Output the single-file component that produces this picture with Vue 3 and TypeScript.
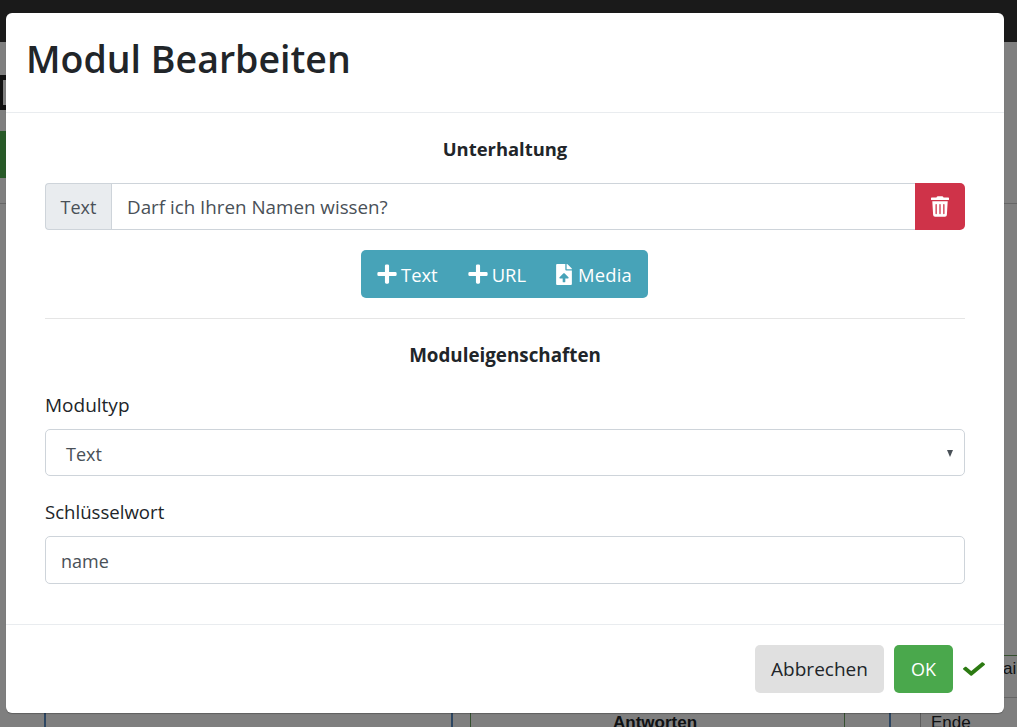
<script setup lang="ts">
const actions: { label: string; icon: 'plus' | 'file' }[] = [
  { label: 'Text', icon: 'plus' },
  { label: 'URL', icon: 'plus' },
  { label: 'Media', icon: 'file' },
]
</script>

<template>
  <div class="page">
    <div class="topbar"></div>
    <div class="brand"><i></i></div>
    <div class="greenbtn"></div>
    <div class="rule"></div>
    <div class="under col-a"></div>
    <div class="under col-b"></div>
    <div class="under col-c"></div>
    <div class="under col-d"></div>
    <div class="under col-e"></div>
    <div class="under col-f"></div>
    <div class="under-text antworten">Antworten</div>
    <div class="under-text ende">Ende</div>
    <div class="under-text ail">ail</div>
    <div class="under-line l1"></div>
    <div class="under-line l2"></div>

    <div class="backdrop"></div>
    <section class="modal">
      <header class="modal-header"><h1>Modul Bearbeiten</h1></header>
      <div class="modal-body">
        <h2 class="section first">Unterhaltung</h2>
        <div class="input-group">
          <span class="addon">Text</span>
          <span class="field">Darf ich Ihren Namen wissen?</span>
          <button class="trash" type="button" aria-label="Löschen">
            <svg width="18" height="21" viewBox="0 0 448 512"><path fill="#fff" d="M432 32H312l-9.400-18.700A24 24 0 0 0 281.100 0H166.800a23.700 23.700 0 0 0-21.400 13.300L136 32H16A16 16 0 0 0 0 48v32a16 16 0 0 0 16 16h416a16 16 0 0 0 16-16V48a16 16 0 0 0-16-16zM53.200 467a48 48 0 0 0 47.900 45h245.800a48 48 0 0 0 47.900-45L416 128H32zM304 208a16 16 0 0 1 32 0v224a16 16 0 0 1-32 0zm-96 0a16 16 0 0 1 32 0v224a16 16 0 0 1-32 0zm-96 0a16 16 0 0 1 32 0v224a16 16 0 0 1-32 0z"/></svg>
          </button>
        </div>
        <div class="actions-wrap">
          <div class="actions">
            <button v-for="a in actions" :key="a.label" class="action" type="button">
              <svg v-if="a.icon === 'plus'" width="20" height="22" viewBox="0 0 448 512"><path fill="#fff" d="M416 208H272V64a32 32 0 0 0-32-32h-32a32 32 0 0 0-32 32v144H32a32 32 0 0 0-32 32v32a32 32 0 0 0 32 32h144v144a32 32 0 0 0 32 32h32a32 32 0 0 0 32-32V304h144a32 32 0 0 0 32-32v-32a32 32 0 0 0-32-32z"/></svg>
              <svg v-else class="file" width="16" height="21" viewBox="0 0 384 512"><path fill="#fff" d="M224 136V0H24A24 24 0 0 0 0 24v464a24 24 0 0 0 24 24h336a24 24 0 0 0 24-24V160H248a24 24 0 0 1-24-24zm65.200 215.600H224v80a16 16 0 0 1-16 16h-32a16 16 0 0 1-16-16v-80H94.800c-14.300 0-21.400-17.300-11.300-27.400l96.400-95.700a17 17 0 0 1 24 0l96.400 95.700c10.200 10.100 3 27.400-11.200 27.400zM377 105L279.100 7a24 24 0 0 0-17-7H256v128h128v-6.100a24 24 0 0 0-7-16.900z"/></svg>
              <span>{{ a.label }}</span>
            </button>
          </div>
        </div>
        <hr />
        <h2 class="section second">Moduleigenschaften</h2>
        <label class="label l-first">Modultyp</label>
        <div class="control select">
          <span>Text</span>
          <i class="caret"></i>
        </div>
        <label class="label l-second">Schlüsselwort</label>
        <div class="control plain">name</div>
      </div>
      <footer class="modal-footer">
        <button class="btn cancel" type="button">Abbrechen</button>
        <button class="btn ok" type="button">OK</button>
        <svg class="check" width="22" height="18" viewBox="0 0 512 512" preserveAspectRatio="none"><path fill="#2c7a12" d="M173.900 439.400l-166.400-166.400c-10-10-10-26.200 0-36.200l36.200-36.200c10-10 26.200-10 36.200 0L192 312.700 432.100 72.600c10-10 26.200-10 36.200 0l36.200 36.200c10 10 10 26.200 0 36.200l-294.400 294.400c-10 10-26.200 10-36.200 0z"/></svg>
      </footer>
    </section>
  </div>
</template>

<style>
html, body { margin: 0; background: #fff; }
</style>

<style scoped>
.page {
  position: relative;
  width: 1017px;
  height: 727px;
  overflow: hidden;
  background: #fff;
  font-family: "Open Sans", "Noto Sans", sans-serif;
  color: #212529;
}
.topbar { position: absolute; left: 0; top: 0; width: 100%; height: 42px; background: #343434; }
.brand { position: absolute; left: 0; top: 75px; width: 40px; height: 35px; background: #222; }
.brand i { position: absolute; left: 3px; top: 5px; width: 4px; height: 25px; background: #fff; }
.greenbtn { position: absolute; left: 0; top: 131px; width: 40px; height: 47px; background: #50b450; }
.rule { position: absolute; left: 0; top: 203px; width: 100%; height: 1px; background: #ccc; }
.under { position: absolute; top: 700px; height: 27px; width: 1px; }
.col-a { left: 44px; width: 2px; background: #5b8cc4; }
.col-b { left: 451px; width: 2px; background: #5b8cc4; }
.col-c { left: 470px; background: #6aa060; }
.col-d { left: 844px; background: #6aa060; }
.col-e { left: 889px; width: 2px; background: #5b8cc4; }
.col-f { left: 920px; background: #bbb; }
.under-text { position: absolute; font-family: "Liberation Sans", sans-serif; font-size: 17px; color: #212529; white-space: nowrap; }
.antworten { left: 613px; top: 713px; font-weight: 700; }
.ende { left: 931px; top: 713px; }
.ail { left: 1003px; top: 659px; }
.under-line { position: absolute; left: 1004px; width: 13px; height: 1px; }
.l1 { top: 655px; background: #6aa060; }
.l2 { top: 697px; background: #ccc; }
.backdrop { position: absolute; inset: 0; background: rgba(0, 0, 0, 0.5); }

.modal {
  position: absolute;
  left: 6px;
  top: 13px;
  width: 998px;
  height: 700px;
  background: #fff;
  border-radius: 6px;
  box-shadow: 0 1px 1px rgba(0, 0, 0, 0.25);
  display: flex;
  flex-direction: column;
}
.modal-header {
  height: 100px;
  box-sizing: border-box;
  border-bottom: 1px solid #e9ecef;
  padding: 19px 20px 0;
}
h1 {
  margin: 0;
  font-size: 37.500px;
  line-height: 54px;
  font-weight: 600;
  color: #212529;
  white-space: nowrap;
}
.modal-body {
  flex: 1;
  padding: 0 39px;
}
.section {
  margin: 0;
  text-align: center;
  font-size: 18.400px;
  line-height: 27px;
  font-weight: 700;
}
.section.first { margin-top: 22px; }
.section.second { margin-top: 23px; font-size: 18.800px; }
.input-group {
  display: flex;
  height: 47px;
  margin-top: 21px;
  font-size: 18px;
  color: #495057;
}
.addon {
  width: 66px;
  box-sizing: border-box;
  display: flex;
  align-items: center;
  justify-content: center;
  background: #e9ecef;
  border: 1px solid #ced4da;
  border-right: 0;
  border-radius: 4px 0 0 4px;
}
.field {
  flex: 1;
  box-sizing: border-box;
  display: flex;
  align-items: center;
  padding-left: 15px;
  font-size: 18.800px;
  border: 1px solid #ced4da;
  border-right: 0;
  background: #fff;
}
.trash {
  width: 50px;
  border: 0;
  padding: 0;
  background: #cf3349;
  border-radius: 0 5px 5px 0;
  display: flex;
  align-items: center;
  justify-content: center;
}
.actions-wrap { display: flex; justify-content: center; margin-top: 20px; padding-right: 1px; }
.actions {
  display: flex;
  width: 287px;
  box-sizing: border-box;
  justify-content: space-between;
  height: 48px;
  background: #47a3b8;
  border-radius: 5px;
  padding: 0 16px;
}
.action {
  border: 0;
  background: none;
  padding: 0;
  color: #fff;
  font: inherit;
  font-size: 18.400px;
  line-height: 25px;
  display: flex;
  align-items: center;
  gap: 4px;
}
.file { margin-right: 2px; }
.file + span { letter-spacing: 0.200px; }
hr {
  margin: 20px 0 0;
  border: 0;
  border-top: 1px solid #e5e5e5;
}
.label { display: block; line-height: 27px; color: #212529; }
.l-first { margin-top: 23px; font-size: 19px; }
.l-second { margin-top: 22px; font-size: 18.600px; }
.control {
  box-sizing: border-box;
  border: 1px solid #ced4da;
  border-radius: 5px;
  font-size: 18px;
  color: #495057;
  display: flex;
  align-items: center;
  background: #fff;
  padding-top: 1px;
}
.select { height: 47px; margin-top: 10px; padding-top: 2px; padding-left: 20px; padding-right: 11px; justify-content: space-between; }
.plain { height: 48px; margin-top: 11px; padding-left: 15px; }
.caret {
  width: 0;
  height: 0;
  border-left: 3.500px solid transparent;
  border-right: 3.500px solid transparent;
  border-top: 7px solid #495057;
}
.modal-footer {
  height: 89px;
  box-sizing: border-box;
  border-top: 1px solid #e9ecef;
  padding: 20px 19px 0 0;
  display: flex;
  justify-content: flex-end;
  align-items: flex-start;
}
.btn {
  height: 48px;
  border: 0;
  border-radius: 5px;
  font: inherit;
  font-size: 19px;
  padding: 0;
}
.cancel { width: 129px; background: #e0e0e0; color: #212529; }
.ok { width: 59px; margin-left: 10px; background: #4aa84c; color: #fff; font-size: 18px; }
.check { margin: 15px 0 0 10px; }
</style>
